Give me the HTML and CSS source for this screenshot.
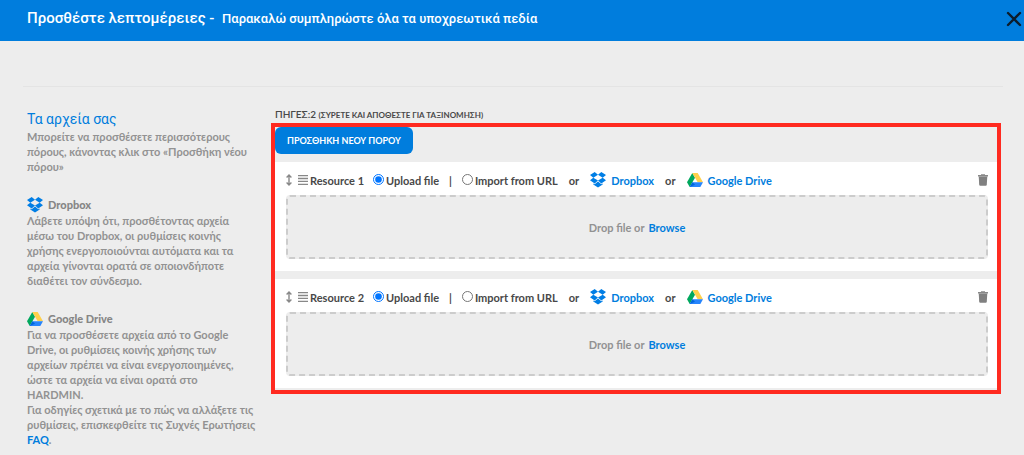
FILE: index.html
```html
<!DOCTYPE html>
<html lang="el">
<head>
  <meta charset="UTF-8">
  <title>Προσθέστε λεπτομέρειες</title>
  <link rel="stylesheet" href="styles.css">
</head>
<body>
  <!-- shared icons -->
  <svg class="sprite" aria-hidden="true">
    <symbol id="dropbox" viewBox="0 0 16 16">
      <path fill="#007ee5" d="M4.7 0 0 3.1l3.3 2.6L8 2.8zM0 8.3l4.7 3.1L8 8.6 3.3 5.7zM8 8.6l3.3 2.8L16 8.3l-3.3-2.6zM16 3.1 11.3 0 8 2.8l4.7 2.9zM8 9.5l-3.3 2.8-1.4-.9v1L8 15.6l4.7-3.2v-1l-1.4.9z"/>
    </symbol>
    <symbol id="gdrive" viewBox="0 0 16 14">
      <path fill="#00a85d" d="M5.3 0 0 9.3 2.7 14 8 4.7z"/>
      <path fill="#ffd04b" d="M5.3 0h5.4L16 9.3h-5.3z"/>
      <path fill="#2684fc" d="M5.4 9.3H16L13.3 14H2.7z"/>
      <path fill="#0066da" d="M2.7 14 5.4 9.3 8 11.8z"/>
    </symbol>
    <symbol id="move" viewBox="0 0 6 12">
      <path fill="none" stroke="#888" stroke-width="1.4" d="M3 1v10M.6 3.4 3 1l2.4 2.4M.6 8.6 3 11l2.4-2.4"/>
    </symbol>
    <symbol id="lines" viewBox="0 0 10 10">
      <path stroke="#888" stroke-width="1.3" d="M0 .7h10M0 3.5h10M0 6.4h10M0 9.3h10"/>
    </symbol>
    <symbol id="trash" viewBox="0 0 10 12">
      <path fill="#888" d="M3 .3h4v.7h3v1.6H0V1h3z"/>
      <path fill="#808080" d="M.7 2.4h8.6l-.5 8.4q-.1 1-1 1H2.2q-.9 0-1-1z"/>
    </symbol>
  </svg>

  <header class="topbar">
    <h1>Προσθέστε λεπτομέρειες - <small>Παρακαλώ συμπληρώστε όλα τα υποχρεωτικά πεδία</small></h1>
    <button class="close" type="button" aria-label="Κλείσιμο">
      <svg width="16" height="16" viewBox="0 0 16 16"><path d="M2 2l12 12M14 2 2 14" fill="none" stroke="#0b1c2c" stroke-width="2.4" stroke-linecap="round"/></svg>
    </button>
  </header>

  <main class="page">
    <aside class="sidebar">
      <section>
        <h2>Τα αρχεία σας</h2>
        <p>Μπορείτε να προσθέσετε περισσότερους<br>πόρους, κάνοντας κλικ στο «Προσθήκη νέου<br>πόρου»</p>
      </section>
      <section>
        <h3><svg class="brand"><use href="#dropbox"/></svg>Dropbox</h3>
        <p>Λάβετε υπόψη ότι, προσθέτοντας αρχεία<br>μέσω του Dropbox, οι ρυθμίσεις κοινής<br>χρήσης ενεργοποιούνται αυτόματα και τα<br>αρχεία γίνονται ορατά σε οποιονδήποτε<br>διαθέτει τον σύνδεσμο.</p>
      </section>
      <section>
        <h3><svg class="brand"><use href="#gdrive"/></svg>Google Drive</h3>
        <p>Για να προσθέσετε αρχεία από το Google<br>Drive, οι ρυθμίσεις κοινής χρήσης των<br>αρχείων πρέπει να είναι ενεργοποιημένες,<br>ώστε τα αρχεία να είναι ορατά στο<br>HARDMIN.<br>Για οδηγίες σχετικά με το πώς να αλλάξετε τις<br>ρυθμίσεις, επισκεφθείτε τις Συχνές Ερωτήσεις<br><a href="#">FAQ</a>.</p>
      </section>
    </aside>

    <div class="content">
      <h2 class="count">ΠΗΓΕΣ:2 <small>(ΣΥΡΕΤΕ ΚΑΙ ΑΠΟΘΕΣΤΕ ΓΙΑ ΤΑΞΙΝΟΜΗΣΗ)</small></h2>
      <div class="panel">
        <button class="add" type="button">ΠΡΟΣΘΗΚΗ ΝΕΟΥ ΠΟΡΟΥ</button>

        <article class="resource">
          <div class="row">
            <svg class="move"><use href="#move"/></svg>
            <svg class="lines"><use href="#lines"/></svg>
            <span class="name">Resource 1</span>
            <label><input type="radio" name="source1" checked>Upload file</label>
            <span class="sep">|</span>
            <label><input type="radio" name="source1">Import from URL</label>
            <span class="or">or</span>
            <a href="#"><svg class="brand"><use href="#dropbox"/></svg>Dropbox</a>
            <span class="or">or</span>
            <a href="#"><svg class="brand"><use href="#gdrive"/></svg>Google Drive</a>
            <button class="delete" type="button" aria-label="Διαγραφή"><svg><use href="#trash"/></svg></button>
          </div>
          <div class="drop">Drop file or <a href="#">Browse</a></div>
        </article>

        <article class="resource">
          <div class="row">
            <svg class="move"><use href="#move"/></svg>
            <svg class="lines"><use href="#lines"/></svg>
            <span class="name">Resource 2</span>
            <label><input type="radio" name="source2" checked>Upload file</label>
            <span class="sep">|</span>
            <label><input type="radio" name="source2">Import from URL</label>
            <span class="or">or</span>
            <a href="#"><svg class="brand"><use href="#dropbox"/></svg>Dropbox</a>
            <span class="or">or</span>
            <a href="#"><svg class="brand"><use href="#gdrive"/></svg>Google Drive</a>
            <button class="delete" type="button" aria-label="Διαγραφή"><svg><use href="#trash"/></svg></button>
          </div>
          <div class="drop">Drop file or <a href="#">Browse</a></div>
        </article>
      </div>
    </div>
  </main>
</body>
</html>
```
FILE: styles.css
```css
* {
  box-sizing: border-box;
}

body {
  margin: 0;
  background: #ededed;
  color: #484848;
  font: 700 11px/15px Lato, "Open Sans", sans-serif;
}

h1, h2, h3, p {
  margin: 0;
}

a {
  color: #007ddd;
  text-decoration: none;
}

button {
  border: 0;
  padding: 0;
  background: none;
  cursor: pointer;
}

svg {
  display: block;
  flex: none;
}

.sprite {
  position: absolute;
  width: 0;
  height: 0;
}

.brand {
  width: 16px;
  height: 16px;
}

.topbar {
  display: flex;
  align-items: center;
  justify-content: space-between;
  height: 41px;
  padding: 0 2px 4px 27px;
  background: #007ddd;
  color: #fff;
}

.topbar h1 {
  font: 500 15px/20px Roboto, sans-serif;
}

.topbar small {
  margin-left: 4px;
  font-size: 13px;
}

.page {
  display: flex;
  margin: 45px 21px 0 23px;
  padding: 19px 2px 8px 4px;
  border-top: 1px solid #e4e4e4;
}

.sidebar {
  flex: none;
  width: 244px;
  padding-top: 4px;
  color: #929292;
  white-space: nowrap;
}

.sidebar section {
  margin-bottom: 22px;
}

.sidebar h2 {
  color: #007ddd;
  font: 400 14px/19px Roboto, sans-serif;
}

.sidebar h3 {
  display: flex;
  align-items: center;
  gap: 5px;
  color: #868686;
  font-size: 11px;
  line-height: 17px;
  font-weight: 900;
}

.content {
  flex: 1;
}

.count {
  padding-left: 4px;
  font-size: 10px;
  line-height: 16px;
  font-weight: 600;
}

.count small {
  font-size: 8px;
  font-weight: 700;
}

.panel {
  border: 4px solid #ff2a20;
  padding-bottom: 2px;
}

.add {
  display: block;
  height: 27px;
  margin-bottom: 8px;
  padding: 0 12px;
  border-radius: 6px;
  background: #007ddd;
  color: #fff;
  font: 700 9px/15px Lato, "Open Sans", sans-serif;
}

.resource {
  padding: 10px 9px 12px 11px;
  background: #fff;
}

.resource + .resource {
  margin-top: 8px;
}

.row {
  display: flex;
  align-items: center;
  height: 16px;
  margin-bottom: 7px;
  white-space: nowrap;
}

.row label,
.row a {
  display: flex;
  align-items: center;
}

.row a {
  gap: 5px;
}

.row input {
  width: 11px;
  height: 11px;
  margin: 0 2px 2px 0;
}

.move {
  width: 6px;
  height: 12px;
  margin-right: 6px;
}

.lines {
  width: 10px;
  height: 10px;
  margin-right: 2px;
}

.name {
  margin-right: 9px;
}

.sep {
  margin: 0 10px;
}

.or {
  margin: 0 11px;
}

.delete {
  margin-left: auto;
}

.delete svg {
  width: 10px;
  height: 12px;
}

.drop {
  display: flex;
  align-items: center;
  justify-content: center;
  gap: 4px;
  height: 64px;
  border: 2px dashed #ccc;
  border-radius: 4px;
  background: #ededed;
  color: #929292;
}
```
